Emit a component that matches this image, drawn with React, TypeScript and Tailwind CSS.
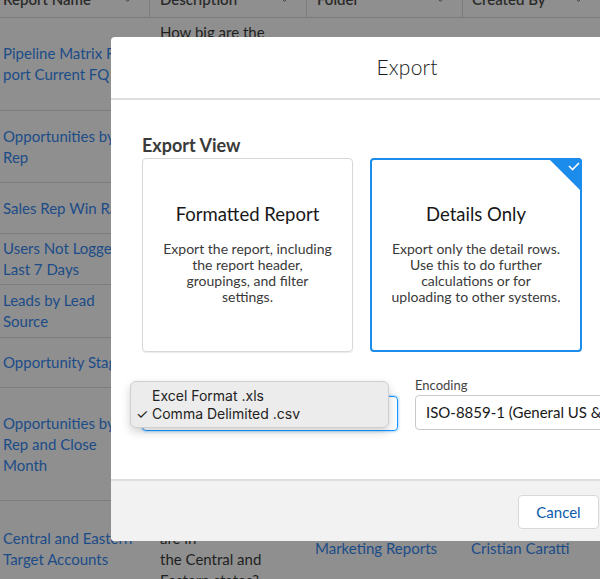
import React from "react";
import { ChevronDown } from "lucide-react";

type Row = { h: string; name: string[]; desc?: string[]; folder?: string; owner?: string };

const rows: Row[] = [
  { h: "h-[93px]", name: ["Pipeline Matrix Re", "port Current FQ"], desc: ["How big are the", "pipelines for this", "fiscal quarter", "by stage?"] },
  { h: "h-[72px]", name: ["Opportunities by", "Rep"] },
  { h: "h-[51px]", name: ["Sales Rep Win Rate"] },
  { h: "h-[51px]", name: ["Users Not Logged In", "Last 7 Days"] },
  { h: "h-[53px]", name: ["Leads by Lead", "Source"] },
  { h: "h-[50px]", name: ["Opportunity Stages"] },
  { h: "h-[113px]", name: ["Opportunities by", "Rep and Close", "Month"] },
  {
    h: "h-[96px]",
    name: ["Central and Eastern", "Target Accounts"],
    desc: ["Which accounts", "are in", "the Central and", "Eastern states?"],
    folder: "Marketing Reports",
    owner: "Cristian Caratti",
  },
];

const headers = [
  { label: "Report Name", w: "w-[150px]" },
  { label: "Description", w: "w-[157px]" },
  { label: "Folder", w: "w-[156px]" },
  { label: "Created By", w: "flex-1" },
];

const Backdrop: React.FC = () => (
  <div className="-mt-[18px] text-[15px] leading-[21px]">
    <div className="flex h-[36px] border-b border-[#7b7b7b]">
      {headers.map((c, i) => (
        <div
          key={c.label}
          className={`${c.w} flex items-center justify-between pl-[3px] pr-[14px] text-[#2b2b2b] ${i < 3 ? "border-r border-[#7b7b7b]" : "pl-[9px] pr-[2px]"} ${i === 1 || i === 2 ? "pl-[10px]" : ""}`}
        >
          <span className="font-semibold">{c.label}</span>
          <ChevronDown size={15} strokeWidth={1.5} className="text-[#3c3c3c]" />
        </div>
      ))}
    </div>
    {rows.map((r, i) => (
      <div key={i} className={`flex ${r.h} border-b border-[#7d7d7d]`}>
        <div className="w-[150px] flex flex-col justify-center pl-[3px] text-[#1c4c88] whitespace-nowrap overflow-hidden">
          {r.name.map((l) => (
            <span key={l}>{l}</span>
          ))}
        </div>
        <div className="w-[157px] flex flex-col justify-center pl-[10px] text-[#1f1f1f] whitespace-nowrap">
          {r.desc?.map((l) => (
            <span key={l}>{l}</span>
          ))}
        </div>
        <div className="w-[156px] flex items-center pl-[8px] text-[#1c4c88]">{r.folder}</div>
        <div className="flex-1 flex items-center pl-[8px] text-[#1c4c88] whitespace-nowrap">{r.owner}</div>
      </div>
    ))}
  </div>
);

const ViewCard: React.FC<{ title: string; text: string[]; selected?: boolean; w: string }> = ({ title, text, selected, w }) => (
  <div
    className={`relative ${w} h-[194px] rounded-[4px] flex flex-col items-center justify-center text-center ${
      selected ? "border-2 border-[#1b8ceb]" : "border border-[#d8d8d8] shadow-[0_1px_1px_rgba(0,0,0,0.08)]"
    }`}
  >
    {selected && (
      <svg className="absolute -top-[2px] -right-[2px]" width="34" height="34" viewBox="0 0 34 34">
        <path d="M0 0 H30 Q34 0 34 4 V34 Z" fill="#1b8ceb" />
        <path d="M21 8 L24.5 11.5 L31 5" stroke="#fff" strokeWidth="1.6" fill="none" />
      </svg>
    )}
    <div className="text-[18.5px] leading-[24px] text-[#181818] mb-[15px] -mt-[4px]">{title}</div>
    <div className="text-[14px] leading-[16px] text-[#3a3a3a]">
      {text.map((l) => (
        <div key={l}>{l}</div>
      ))}
    </div>
  </div>
);

const ExportModal: React.FC = () => (
  <div className="absolute left-[111px] top-[37px] w-[592px] rounded-[4px] bg-white overflow-hidden">
    <div className="h-[63px] border-b-2 border-[#dedede] flex items-center justify-center">
      <h2 className="text-[21px] font-light text-[#1a1a1a] tracking-[0.2px] -mt-[2px]">Export</h2>
    </div>
    <div className="pl-[31px] pr-[31px] pt-[34px] pb-[48px]">
      <div className="text-[18px] leading-[22px] font-bold text-[#3a3a3a] mb-[2px]">Export View</div>
      <div className="flex gap-[17px]">
        <ViewCard
          w="w-[211px]"
          title="Formatted Report"
          text={["Export the report, including", "the report header,", "groupings, and filter", "settings."]}
        />
        <ViewCard
          w="w-[212px]"
          selected
          title="Details Only"
          text={["Export only the detail rows.", "Use this to do further", "calculations or for", "uploading to other systems."]}
        />
      </div>
      <div className="flex gap-[17px] mt-[25px]">
        <div className="relative w-[257px]">
          <div className="text-[13px] leading-[18px] text-[#444] mb-[1px]">Format</div>
          <div className="h-[35px] rounded-[4px] border border-[#1b96ff] shadow-[0_0_3px_#5aaeff] flex items-center justify-between px-[10px] text-[15px] text-[#181818]">
            <span>Comma Delimited .csv</span>
            <span className="text-[11px] leading-[8px] flex flex-col text-[#555]">
              <span>⌃</span>
            </span>
          </div>
          <div className="absolute -left-[12px] top-[4px] w-[259px] h-[47px] rounded-[6px] border border-[#cfcfcf] bg-[#ececec] shadow-[0_4px_10px_rgba(0,0,0,0.18)] pt-[5px] text-[14px] leading-[18px] text-[#222] font-['Inter']">
            <div className="pl-[21px]">Excel Format .xls</div>
            <div className="flex">
              <span className="w-[21px] pl-[5px]">✓</span>
              <span>Comma Delimited .csv</span>
            </div>
          </div>
        </div>
        <div className="w-[257px]">
          <div className="text-[13px] leading-[18px] text-[#444] mb-[1px] -mt-[1px]">Encoding</div>
          <div className="h-[35px] rounded-[4px] border border-[#c9c9c9] flex items-center px-[10px] text-[15px] text-[#181818] whitespace-nowrap overflow-hidden mt-[1px]">
            ISO-8859-1 (General US &amp; Western European, ISO-LATIN-1)
          </div>
        </div>
      </div>
    </div>
    <div className="h-[62px] border-t-2 border-[#dedede] bg-[#f2f2f2] flex items-center justify-end gap-[4px] pr-[20px]">
      <button className="w-[81px] h-[34px] mt-[2px] rounded-[4px] border border-[#d8d8d8] bg-white text-[15px] text-[#0b5cab]">Cancel</button>
      <button className="w-[80px] h-[34px] mt-[2px] rounded-[4px] bg-[#0176d3] text-[15px] text-white">Export</button>
    </div>
  </div>
);

export default function App() {
  return (
    <div className="relative w-[600px] h-[579px] overflow-hidden bg-[#8f8f8f] font-['Lato',sans-serif]">
      <Backdrop />
      <ExportModal />
    </div>
  );
}
